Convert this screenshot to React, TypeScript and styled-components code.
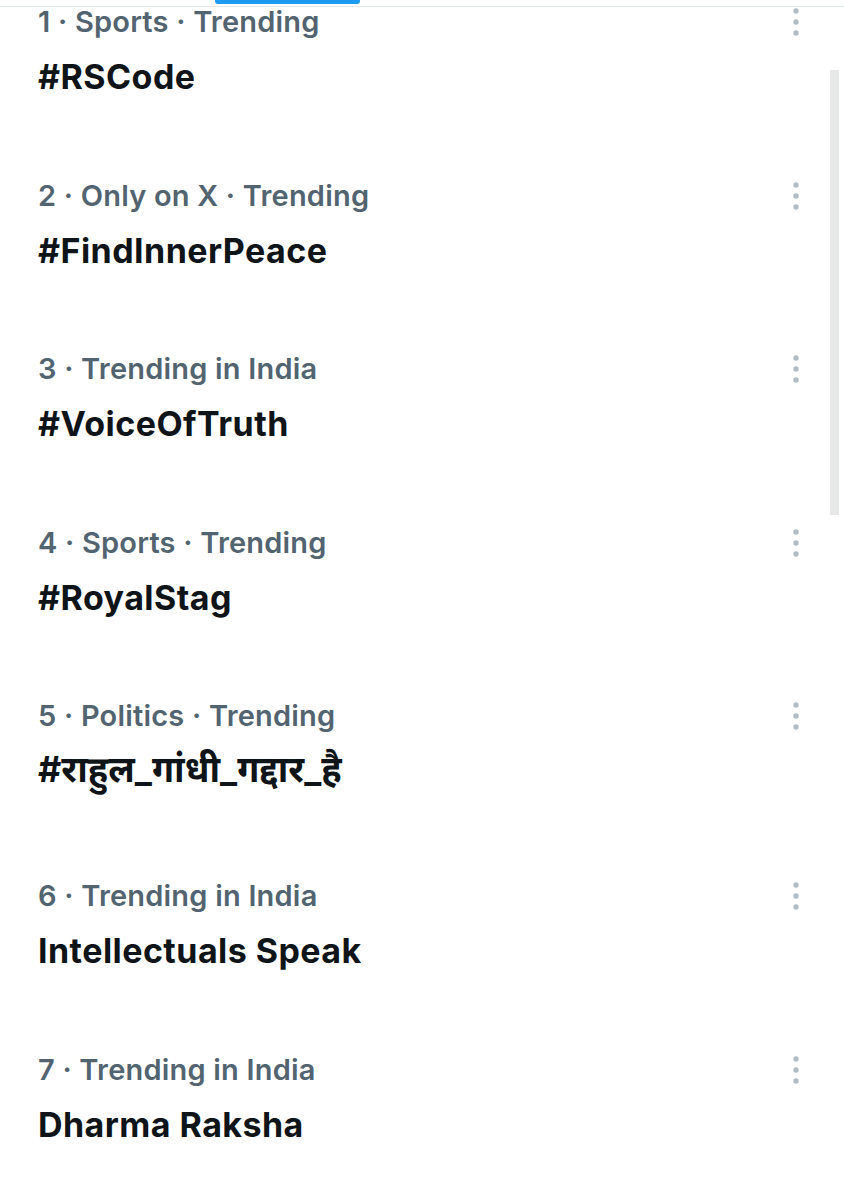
import React from "react";
import styled, { createGlobalStyle } from "styled-components";

const Global = createGlobalStyle`
  html, body { margin: 0; padding: 0; background: #ffffff; }
  body { font-family: Inter, "Noto Sans", "Noto Sans Devanagari", sans-serif; }
  * { box-sizing: border-box; }
`;

const Page = styled.div`
  position: relative;
  width: 844px;
  height: 1200px;
  overflow: hidden;
  background: #ffffff;
`;

const TabBar = styled.div`
  position: absolute;
  top: 0;
  left: 0;
  right: 0;
  height: 7px;
  background: #ffffff;
  border-bottom: 1px solid #e4e9ec;
  z-index: 2;
`;

const TabIndicator = styled.div`
  position: absolute;
  top: 0;
  left: 215px;
  width: 145px;
  height: 4px;
  background: #1d9bf0;
  border-radius: 0 0 3px 3px;
`;

const ScrollTrack = styled.div`
  position: absolute;
  top: 70px;
  right: 5px;
  width: 9px;
  height: 445px;
  background: #e6e7e7;
  z-index: 2;
`;

const List = styled.div`
  display: flex;
  flex-direction: column;
  padding-top: 2px;
`;

const Row = styled.div<{ $extra?: number }>`
  display: flex;
  align-items: flex-start;
  padding: 0 38px 0 38px;
  height: ${(p) => 173.5 + (p.$extra || 0)}px;
`;

const Texts = styled.div`
  flex: 1;
  display: flex;
  flex-direction: column;
  gap: 13px;
`;

const Meta = styled.div`
  font-size: 29px;
  line-height: 40px;
  font-weight: 600;
  letter-spacing: 0.2px;
  color: #536471;
  white-space: nowrap;
`;

const Title = styled.div<{ $tall?: boolean }>`
  font-size: ${(p) => (p.$tall ? "36px" : "34px")};
  line-height: ${(p) => (p.$tall ? "40px" : "44px")};
  font-weight: 700;
  letter-spacing: ${(p) => (p.$tall ? "0" : "0.45px")};
  color: #0f1419;
  white-space: nowrap;
  font-family: Inter, "Noto Sans Devanagari", "Noto Sans", sans-serif;
`;

const MoreButton = styled.div`
  width: 20px;
  height: 40px;
  display: flex;
  align-items: center;
  justify-content: center;
  color: #b1bcc5;
`;

const Dots = () => (
  <svg width="8" height="30" viewBox="0 0 8 30">
    <circle cx="4" cy="4" r="2.7" fill="currentColor" />
    <circle cx="4" cy="15" r="2.7" fill="currentColor" />
    <circle cx="4" cy="26" r="2.7" fill="currentColor" />
  </svg>
);

const trends = [
  { meta: "1 · Sports · Trending", title: "#RSCode" },
  { meta: "2 · Only on X · Trending", title: "#FindInnerPeace" },
  { meta: "3 · Trending in India", title: "#VoiceOfTruth" },
  { meta: "4 · Sports · Trending", title: "#RoyalStag" },
  { meta: "5 · Politics · Trending", title: "#राहुल_गांधी_गद्दार_है", tall: true },
  { meta: "6 · Trending in India", title: "Intellectuals Speak" },
  { meta: "7 · Trending in India", title: "Dharma Raksha" },
];

export default function App() {
  return (
    <Page>
      <Global />
      <TabBar>
        <TabIndicator />
      </TabBar>
      <ScrollTrack />
      <List>
        {trends.map((t) => (
          <Row key={t.meta} $extra={t.tall ? 6.5 : 0}>
            <Texts>
              <Meta>{t.meta}</Meta>
              <Title $tall={t.tall}>{t.title}</Title>
            </Texts>
            <MoreButton>
              <Dots />
            </MoreButton>
          </Row>
        ))}
      </List>
    </Page>
  );
}
